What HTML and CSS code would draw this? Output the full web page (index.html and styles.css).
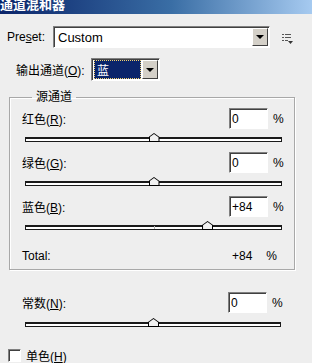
FILE: index.html
```html
<!DOCTYPE html>
<html lang="zh-CN">

<head>
    <meta charset="UTF-8">
    <title>通道混和器</title>
    <link rel="stylesheet" href="styles.css">
</head>

<body>
    <div class="titlebar"><span class="title">通道混和器</span></div>

    <div class="row preset-row">
        <span class="label">Pre<u>s</u>et:</span>
        <div class="combo combo-preset">
            <span class="combo-text">Custom</span>
            <span class="combo-btn"><span class="arrow"></span></span>
        </div>
        <svg class="menu-icon" width="11" height="11" viewBox="0 0 11 11">
            <path d="M0 1.5h2M3 1.5h6M0 4.5h2M3 4.5h6M0 7.5h2M3 7.5h3" stroke="#555" stroke-width="1" />
            <path d="M6 8h5l-2.5 3z" fill="#333" />
        </svg>
    </div>

    <div class="row output-row">
        <span class="label">输出通道(<u>O</u>):</span>
        <div class="combo combo-output">
            <span class="combo-text selected"><span class="focus">蓝</span></span>
            <span class="combo-btn"><span class="arrow"></span></span>
        </div>
    </div>

    <fieldset class="group">
        <legend>源通道</legend>

        <div class="field">
            <span class="label">红色(<u>R</u>):</span>
            <input class="num" type="text" value="0">
            <span class="pct">%</span>
        </div>
        <div class="slider">
            <span class="thumb" style="left: 50%"></span>
        </div>

        <div class="field">
            <span class="label">绿色(<u>G</u>):</span>
            <input class="num" type="text" value="0">
            <span class="pct">%</span>
        </div>
        <div class="slider">
            <span class="thumb" style="left: 50%"></span>
        </div>

        <div class="field">
            <span class="label">蓝色(<u>B</u>):</span>
            <input class="num" type="text" value="+84">
            <span class="pct">%</span>
        </div>
        <div class="slider">
            <span class="tick"></span>
            <span class="thumb" style="left: 71%"></span>
        </div>

        <div class="total">
            <span class="label">Total:</span>
            <span class="total-value">+84</span>
            <span class="total-pct">%</span>
        </div>
    </fieldset>

    <div class="field constant">
        <span class="label">常数(<u>N</u>):</span>
        <input class="num" type="text" value="0">
        <span class="pct">%</span>
    </div>
    <div class="slider constant-slider">
        <span class="thumb" style="left: 50%"></span>
    </div>

    <div class="check-row">
        <span class="checkbox"></span>
        <span class="label">单色(<u>H</u>)</span>
    </div>
</body>

</html>
```

FILE: styles.css
```css
* {
    box-sizing: border-box;
}

body {
    margin: 0;
    width: 312px;
    height: 363px;
    overflow: hidden;
    background-color: #eeeeee;
    font-family: "Liberation Sans", "Noto Sans CJK SC", sans-serif;
    font-size: 12px;
    color: #000;
}

u {
    text-decoration: underline;
    text-underline-offset: 1px;
}

/* title bar, cut at the top */
.titlebar {
    height: 14px;
    overflow: hidden;
    background: linear-gradient(to right, #0a246a 0%, #3a6ea5 55%, #a6caf0 100%);
}

.title {
    display: block;
    margin-top: -5px;
    line-height: 20px;
    font-size: 13px;
    font-weight: bold;
    color: #fff;
}

.row {
    display: flex;
    align-items: center;
}

.preset-row {
    margin-top: 12px;
    padding-left: 7px;
    height: 22px;
}

.preset-row .label {
    width: 46px;
}

.combo {
    display: flex;
    background: #fff;
    border: 1px solid;
    border-color: #808080 #ffffff #ffffff #808080;
    box-shadow: inset 1px 1px 0 #404040;
    padding: 1px 1px 1px 2px;
}

.combo-preset {
    width: 217px;
    height: 22px;
}

.combo-text {
    flex: 1;
    display: flex;
    align-items: center;
    padding-left: 2px;
    font-size: 13px;
}

.combo-btn {
    width: 16px;
    display: flex;
    align-items: center;
    justify-content: center;
    background: #d4d0c8;
    border: 1px solid;
    border-color: #ffffff #404040 #404040 #ffffff;
}

.arrow {
    width: 0;
    height: 0;
    border-left: 4px solid transparent;
    border-right: 4px solid transparent;
    border-top: 4px solid #000;
}

.menu-icon {
    margin-left: 12px;
    margin-top: 2px;
}

.output-row {
    margin-top: 10px;
    padding-left: 16px;
    height: 23px;
}

.output-row .label {
    width: 75px;
}

.combo-output {
    width: 69px;
    height: 23px;
}

.selected {
    background: #0a246a;
    color: #fff;
    padding: 0;
    margin-right: 1px;
}

.focus {
    display: flex;
    align-items: center;
    width: 100%;
    height: 100%;
    padding-left: 2px;
    border: 1px dotted #f0d070;
    font-size: 12px;
}

/* source channel group */
.group {
    width: 286px;
    margin: 9px 0 0 9px;
    padding: 0 11px 6px 12px;
    border: 1px solid #a8a8a8;
    box-shadow: 1px 1px 0 #fff, inset 1px 1px 0 #fff;
}

.group legend {
    padding: 0 4px;
    margin-left: 10px;
    line-height: 14px;
}

.field {
    display: flex;
    align-items: center;
    height: 21px;
    margin-top: 10px;
}

.group legend + .field {
    margin-top: 4px;
}

.field .label {
    flex: 1;
}

.num {
    width: 39px;
    height: 21px;
    margin: 0;
    padding: 0 2px;
    font-family: inherit;
    font-size: 12px;
    background: #fff;
    border: 1px solid;
    border-color: #808080 #ffffff #ffffff #808080;
    box-shadow: inset 1px 1px 0 #404040;
    outline: none;
}

.pct {
    width: 15px;
    padding-left: 5px;
}

.slider {
    position: relative;
    height: 5px;
    margin: 8px 1px 0 3px;
    background: #fff;
    border: 1px solid #1a1a1a;
    border-top-width: 2px;
}

.tick {
    position: absolute;
    left: 50%;
    top: -1px;
    width: 1px;
    height: 3px;
    background: #b0b0b0;
}

.thumb {
    position: absolute;
    bottom: -1px;
    width: 11px;
    height: 9px;
    margin-left: -5px;
    background: #000;
    clip-path: polygon(0 100%, 0 45%, 50% 0, 100% 45%, 100% 100%);
}

.thumb::after {
    content: "";
    position: absolute;
    left: 1px;
    top: 1px;
    right: 1px;
    bottom: 1px;
    background: #f2f2f2;
    clip-path: polygon(0 100%, 0 45%, 50% 0, 100% 45%, 100% 100%);
}

.total {
    display: flex;
    align-items: center;
    line-height: 14px;
    margin-top: 19px;
}

.total .label {
    flex: 1;
}

.total-pct {
    margin: 0 6px 0 14px;
}

/* constant and monochrome */
.constant {
    margin-top: 22px;
    padding: 0 30px 0 22px;
}

.constant-slider {
    margin: 9px 31px 0 25px;
}

.check-row {
    display: flex;
    align-items: center;
    margin-top: 20px;
    padding-left: 8px;
}

.checkbox {
    width: 13px;
    height: 13px;
    margin-right: 5px;
    background: #fff;
    border: 1px solid;
    border-color: #808080 #ffffff #ffffff #808080;
    box-shadow: inset 1px 1px 0 #404040;
}
```
